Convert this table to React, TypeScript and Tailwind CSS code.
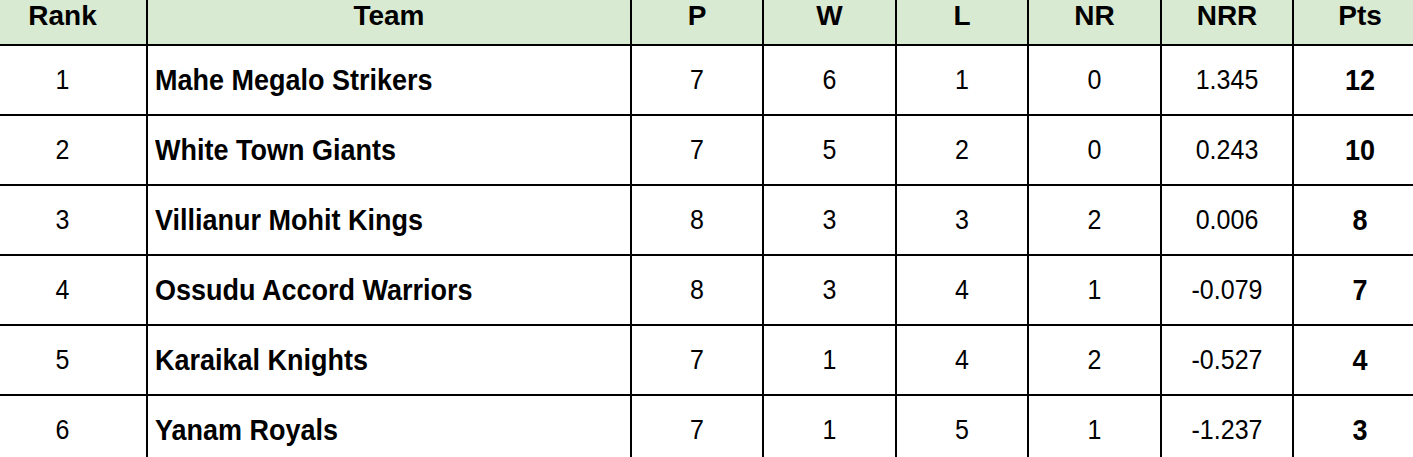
import React from "react";

type Row = {
  rank: number;
  team: string;
  p: number;
  w: number;
  l: number;
  nr: number;
  nrr: string;
  pts: number;
};

const rows: Row[] = [
  { rank: 1, team: "Mahe Megalo Strikers", p: 7, w: 6, l: 1, nr: 0, nrr: "1.345", pts: 12 },
  { rank: 2, team: "White Town Giants", p: 7, w: 5, l: 2, nr: 0, nrr: "0.243", pts: 10 },
  { rank: 3, team: "Villianur Mohit Kings", p: 8, w: 3, l: 3, nr: 2, nrr: "0.006", pts: 8 },
  { rank: 4, team: "Ossudu Accord Warriors", p: 8, w: 3, l: 4, nr: 1, nrr: "-0.079", pts: 7 },
  { rank: 5, team: "Karaikal Knights", p: 7, w: 1, l: 4, nr: 2, nrr: "-0.527", pts: 4 },
  { rank: 6, team: "Yanam Royals", p: 7, w: 1, l: 5, nr: 1, nrr: "-1.237", pts: 3 },
];

const font = { fontFamily: '"Liberation Sans", Arial, sans-serif' };

function Num({ children }: { children: React.ReactNode }) {
  return <span className="inline-block scale-y-[1.1]">{children}</span>;
}

function Bold({ children }: { children: React.ReactNode }) {
  return <span className="inline-block scale-y-[1.06] font-bold text-[27px]">{children}</span>;
}

export default function App() {
  return (
    <div className="w-[1413px] h-[457px] overflow-hidden bg-white text-black" style={font}>
      <div className="ml-[-21px] w-[1460px]">
        {/* Header */}
        <div className="flex h-[46px] bg-[#d9ead3] border-b-2 border-black text-[28px] font-bold leading-[32px]">
          <div className="w-[169px] border-r-2 border-black text-center">Rank</div>
          <div className="w-[484px] border-r-2 border-black text-center">Team</div>
          <div className="w-[132px] border-r-2 border-black text-center">P</div>
          <div className="w-[133px] border-r-2 border-black text-center">W</div>
          <div className="w-[132px] border-r-2 border-black text-center">L</div>
          <div className="w-[133px] border-r-2 border-black text-center">NR</div>
          <div className="w-[132px] border-r-2 border-black text-center">NRR</div>
          <div className="w-[132px] text-center">Pts</div>
        </div>
        {rows.map((r) => (
          <div key={r.rank} className="flex h-[70px] border-b-2 border-black text-[25px]">
            <div className="w-[169px] border-r-2 border-black flex items-center justify-center">
              <Num>{r.rank}</Num>
            </div>
            <div className="w-[484px] border-r-2 border-black flex items-center pl-[7px]">
              <Bold>{r.team}</Bold>
            </div>
            <div className="w-[132px] border-r-2 border-black flex items-center justify-center">
              <Num>{r.p}</Num>
            </div>
            <div className="w-[133px] border-r-2 border-black flex items-center justify-center">
              <Num>{r.w}</Num>
            </div>
            <div className="w-[132px] border-r-2 border-black flex items-center justify-center">
              <Num>{r.l}</Num>
            </div>
            <div className="w-[133px] border-r-2 border-black flex items-center justify-center">
              <Num>{r.nr}</Num>
            </div>
            <div className="w-[132px] border-r-2 border-black flex items-center justify-center">
              <Num>{r.nrr}</Num>
            </div>
            <div className="w-[132px] flex items-center justify-center">
              <Bold>{r.pts}</Bold>
            </div>
          </div>
        ))}
      </div>
    </div>
  );
}
